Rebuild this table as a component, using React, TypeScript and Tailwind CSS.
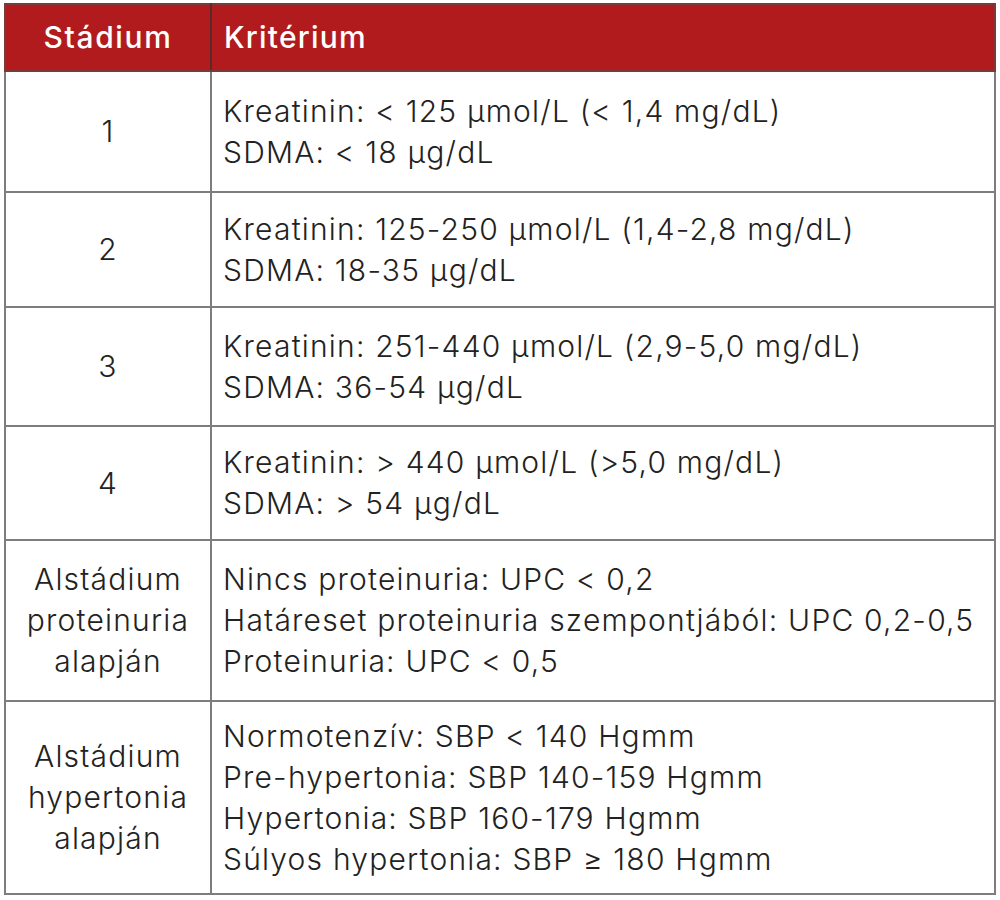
const rows: { stage: string[]; criteria: string[]; h: string }[] = [
  {
    stage: ["1"],
    criteria: ["Kreatinin: < 125 µmol/L (< 1,4 mg/dL)", "SDMA: < 18 µg/dL"],
    h: "h-[121px]",
  },
  {
    stage: ["2"],
    criteria: ["Kreatinin: 125-250 µmol/L (1,4-2,8 mg/dL)", "SDMA: 18-35 µg/dL"],
    h: "h-[115px]",
  },
  {
    stage: ["3"],
    criteria: ["Kreatinin: 251-440 µmol/L (2,9-5,0 mg/dL)", "SDMA: 36-54 µg/dL"],
    h: "h-[119px]",
  },
  {
    stage: ["4"],
    criteria: ["Kreatinin: > 440 µmol/L (>5,0 mg/dL)", "SDMA: > 54 µg/dL"],
    h: "h-[114px]",
  },
  {
    stage: ["Alstádium", "proteinuria", "alapján"],
    criteria: [
      "Nincs proteinuria: UPC < 0,2",
      "Határeset proteinuria szempontjából: UPC 0,2-0,5",
      "Proteinuria: UPC < 0,5",
    ],
    h: "h-[161px]",
  },
  {
    stage: ["Alstádium", "hypertonia", "alapján"],
    criteria: [
      "Normotenzív: SBP < 140 Hgmm",
      "Pre-hypertonia: SBP 140-159 Hgmm",
      "Hypertonia: SBP 160-179 Hgmm",
      "Súlyos hypertonia: SBP ≥ 180 Hgmm",
    ],
    h: "h-[193px]",
  },
];

export default function App() {
  return (
    <div className="w-[1000px] h-[900px] bg-white pt-[3px] pl-[4px] font-['Inter',sans-serif]">
      <table className="w-[992px] border-collapse table-fixed">
        <colgroup>
          <col className="w-[206px]" />
          <col />
        </colgroup>
        <thead>
          <tr className="h-[67px] bg-[#b11b1d] text-white text-[30px]">
            <th className="border-2 border-[#7a3a3a] border-r-[#5a2a2a] text-center font-medium tracking-[1.6px]">
              Stádium
            </th>
            <th className="border-2 border-[#7a3a3a] text-left pl-[12px] font-medium tracking-[1.2px]">
              Kritérium
            </th>
          </tr>
        </thead>
        <tbody className="text-[#222] text-[30px] font-light leading-[41px] tracking-[1.2px]">
          {rows.map((r, i) => (
            <tr key={i} className={r.h}>
              <td className="border-2 border-[#7d7d7d] text-center align-middle">
                {r.stage.map((s) => (
                  <div key={s}>{s}</div>
                ))}
              </td>
              <td className="border-2 border-[#7d7d7d] pl-[11px] align-middle">
                {r.criteria.map((c) => (
                  <div key={c} className="whitespace-nowrap">
                    {c}
                  </div>
                ))}
              </td>
            </tr>
          ))}
        </tbody>
      </table>
    </div>
  );
}
